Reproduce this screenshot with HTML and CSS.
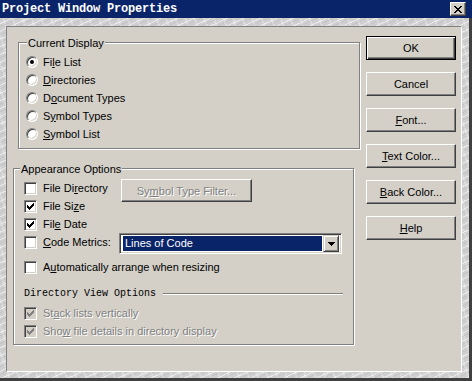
FILE: index.html
```html
<!DOCTYPE html>
<html lang="en">
<head>
    <meta charset="UTF-8">
    <title>Project Window Properties</title>
    <link rel="stylesheet" href="styles.css">
</head>
<body>
    <div class="window">
        <div class="titlebar">
            <span class="title">Project Window Properties</span>
            <span class="close-btn">
                <svg width="8" height="7" viewBox="0 0 8 7" shape-rendering="crispEdges">
                    <path d="M0 0h2v1h1v1h2v-1h1v-1h2v1h-1v1h-1v1h-1v1h1v1h1v1h1v1h-2v-1h-1v-1h-2v1h-1v1h-2v-1h1v-1h1v-1h1v-1h-1v-1h-1z" fill="#000"/>
                </svg>
            </span>
        </div>
        <div class="frame">
            <div class="panel">
                <div class="left-col">
                    <div class="group group-display">
                        <span class="group-title">Current Display</span>
                        <div class="radio-list">
                            <label class="opt"><span class="radio checked"></span><span>Fi<u>l</u>e List</span></label>
                            <label class="opt"><span class="radio"></span><span><u>D</u>irectories</span></label>
                            <label class="opt"><span class="radio"></span><span>D<u>o</u>cument Types</span></label>
                            <label class="opt"><span class="radio"></span><span>S<u>y</u>mbol Types</span></label>
                            <label class="opt"><span class="radio"></span><span><u>S</u>ymbol List</span></label>
                        </div>
                    </div>

                    <div class="group group-appearance">
                        <span class="group-title">Appearance Options</span>
                        <div class="appearance-grid">
                            <label class="opt grid-left"><span class="check"></span><span>File Di<u>r</u>ectory</span></label>
                            <button class="btn btn-disabled filter-btn">Sy<u>m</u>bol Type Filter...</button>
                            <label class="opt grid-left"><span class="check"><svg width="7" height="7" viewBox="0 0 7 7" shape-rendering="crispEdges"><path d="M0 2h1v1h1v1h1v-1h1v-1h1v-1h1v-1h1v3h-1v1h-1v1h-1v1h-1v1h-1v-1h-1v-1h-1z" fill="#000"/></svg></span><span>File Si<u>z</u>e</span></label>
                            <label class="opt grid-left"><span class="check"><svg width="7" height="7" viewBox="0 0 7 7" shape-rendering="crispEdges"><path d="M0 2h1v1h1v1h1v-1h1v-1h1v-1h1v-1h1v3h-1v1h-1v1h-1v1h-1v1h-1v-1h-1v-1h-1z" fill="#000"/></svg></span><span>Fil<u>e</u> Date</span></label>
                            <label class="opt grid-left"><span class="check"></span><span><u>C</u>ode Metrics:</span></label>
                            <div class="combo">
                                <span class="combo-value">Lines of Code</span>
                                <span class="combo-arrow">
                                    <svg width="7" height="4" viewBox="0 0 7 4" shape-rendering="crispEdges"><path d="M0 0h7v1h-1v1h-1v1h-1v1h-1v-1h-1v-1h-1v-1h-1z" fill="#000"/></svg>
                                </span>
                            </div>
                        </div>
                        <label class="opt opt-auto"><span class="check"></span><span>A<u>u</u>tomatically arrange when resizing</span></label>

                        <div class="subhead">
                            <span class="subhead-text">Directory View Options</span>
                            <span class="subhead-line"></span>
                        </div>
                        <label class="opt opt-disabled"><span class="check check-disabled"><svg width="7" height="7" viewBox="0 0 7 7" shape-rendering="crispEdges"><path d="M0 2h1v1h1v1h1v-1h1v-1h1v-1h1v-1h1v3h-1v1h-1v1h-1v1h-1v1h-1v-1h-1v-1h-1z" fill="#808080"/></svg></span><span>St<u>a</u>ck lists vertically</span></label>
                        <label class="opt opt-disabled"><span class="check check-disabled"><svg width="7" height="7" viewBox="0 0 7 7" shape-rendering="crispEdges"><path d="M0 2h1v1h1v1h1v-1h1v-1h1v-1h1v-1h1v3h-1v1h-1v1h-1v1h-1v1h-1v-1h-1v-1h-1z" fill="#808080"/></svg></span><span>Sho<u>w</u> file details in directory display</span></label>
                    </div>
                </div>

                <div class="btn-col">
                    <button class="btn btn-default">OK</button>
                    <button class="btn">Cancel</button>
                    <button class="btn"><u>F</u>ont...</button>
                    <button class="btn"><u>T</u>ext Color...</button>
                    <button class="btn"><u>B</u>ack Color...</button>
                    <button class="btn"><u>H</u>elp</button>
                </div>
            </div>
        </div>
    </div>
</body>
</html>
```

FILE: styles.css
```css
body {
    margin: 0;
    font-family: "Liberation Sans", Arial, sans-serif;
    font-size: 11px;
    color: #000;
}

u {
    text-decoration-thickness: 1px;
    text-underline-offset: 1px;
}

.window {
    width: 472px;
    height: 381px;
    display: flex;
    flex-direction: column;
    background-color: #cfcfcf;
    background-image:
        repeating-linear-gradient(155deg, rgba(255, 255, 255, 0.55) 0 1px, transparent 1px 3px, rgba(0, 0, 0, 0.05) 3px 4px, transparent 4px 7px),
        repeating-linear-gradient(70deg, rgba(255, 255, 255, 0.25) 0 2px, transparent 2px 9px);
}

.titlebar {
    height: 18px;
    background: #0a246a;
    display: flex;
    align-items: center;
    justify-content: space-between;
    padding: 0 6px 0 2px;
}

.title {
    color: #fff;
    font-family: "Liberation Mono", "DejaVu Sans Mono", monospace;
    font-weight: bold;
    font-size: 12px;
    letter-spacing: -0.2px;
}

.close-btn {
    width: 16px;
    height: 14px;
    box-sizing: border-box;
    background: #d4d0c8;
    border: 1px solid;
    border-color: #fff #404040 #404040 #fff;
    box-shadow: inset -1px -1px 0 #808080;
    display: flex;
    align-items: center;
    justify-content: center;
}

.frame {
    flex: 1;
    padding: 8px 0 0 6px;
    border-right: 3px solid #404040;
    border-bottom: 3px solid #404040;
}

.panel {
    width: 456px;
    height: 346px;
    box-sizing: border-box;
    background: #d4d0c8;
    border: 1px solid;
    border-color: #808080 #fff #fff #808080;
    display: flex;
    column-gap: 6px;
}

.left-col {
    width: 353px;
    display: flex;
    flex-direction: column;
    align-items: flex-start;
}

.group {
    box-sizing: border-box;
    border: 1px solid #808080;
    box-shadow: inset 1px 1px 0 #fff, 1px 1px 0 #fff;
    display: flex;
    flex-direction: column;
    align-items: flex-start;
}

.group-title {
    background: #d4d0c8;
    padding: 0 1px;
    line-height: 13px;
    margin-top: -6px;
}

.group-display {
    margin: 15px 0 0 11px;
    width: 342px;
    height: 107px;
    padding-left: 7px;
}

.group-display .group-title {
    margin-left: 1px;
}

.radio-list {
    margin-top: 3px;
}

.opt {
    display: flex;
    align-items: center;
    height: 18px;
    white-space: nowrap;
}

.radio {
    width: 12px;
    height: 12px;
    box-sizing: border-box;
    border-radius: 50%;
    background: #fff;
    border: 1px solid;
    border-color: #808080 #fff #fff #808080;
    box-shadow: inset 1px 1px 0 #404040, inset -1px -1px 0 #d4d0c8;
    margin-right: 5px;
    display: flex;
    align-items: center;
    justify-content: center;
}

.radio.checked::after {
    content: "";
    width: 4px;
    height: 4px;
    border-radius: 50%;
    background: #000;
}

.check {
    width: 13px;
    height: 13px;
    box-sizing: border-box;
    background: #fff;
    border: 1px solid;
    border-color: #808080 #fff #fff #808080;
    box-shadow: inset 1px 1px 0 #404040, inset -1px -1px 0 #d4d0c8;
    margin-right: 6px;
    display: flex;
    align-items: center;
    justify-content: center;
    flex-shrink: 0;
}

.check-disabled {
    background: #d4d0c8;
}

.group-appearance {
    margin: 19px 0 0 6px;
    width: 341px;
    height: 177px;
    padding: 0 10px;
}

.group-appearance .group-title {
    margin-left: -4px;
}

.appearance-grid {
    margin-top: 3px;
    align-self: stretch;
    display: grid;
    grid-template-columns: 95px 1fr;
    grid-auto-rows: 18px;
}

.grid-left {
    grid-column: 1;
}

.btn {
    width: 90px;
    height: 24px;
    box-sizing: border-box;
    padding: 0;
    background: #d4d0c8;
    font-family: inherit;
    font-size: 11px;
    color: #000;
    border: 1px solid;
    border-color: #fff #404040 #404040 #fff;
    box-shadow: inset -1px -1px 0 #808080;
}

.btn-default {
    border-color: #000;
    box-shadow: inset 1px 1px 0 #fff, inset -1px -1px 0 #404040, inset -2px -2px 0 #808080;
}

.btn-disabled {
    color: #808080;
    text-shadow: 1px 1px 0 #fff;
}

.filter-btn {
    grid-column: 2;
    grid-row: 1 / span 2;
    align-self: start;
    width: 131px;
    height: 23px;
    margin-left: 2px;
}

.combo {
    grid-column: 2;
    align-self: start;
    width: 223px;
    height: 21px;
    box-sizing: border-box;
    background: #fff;
    border: 1px solid;
    border-color: #808080 #fff #fff #808080;
    box-shadow: inset 1px 1px 0 #404040, inset -1px -1px 0 #d4d0c8;
    padding: 2px 2px 2px 3px;
    display: flex;
    gap: 1px;
}

.combo-value {
    flex: 1;
    background: #0a246a;
    color: #fff;
    padding-left: 2px;
    line-height: 15px;
}

.combo-arrow {
    width: 16px;
    box-sizing: border-box;
    margin: -1px 0;
    background: #d4d0c8;
    border: 1px solid;
    border-color: #d4d0c8 #404040 #404040 #d4d0c8;
    box-shadow: inset 1px 1px 0 #fff, inset -1px -1px 0 #808080;
    display: flex;
    align-items: center;
    justify-content: center;
}

.opt-auto {
    margin-top: 7px;
}

.subhead {
    margin-top: 8px;
    height: 18px;
    align-self: stretch;
    display: flex;
    align-items: center;
    gap: 7px;
}

.subhead-text {
    font-family: "Liberation Mono", "DejaVu Sans Mono", monospace;
    font-size: 10px;
}

.subhead-line {
    flex: 1;
    border-top: 1px solid #808080;
    border-bottom: 1px solid #fff;
    margin-top: 2px;
}

.opt-disabled {
    color: #808080;
    text-shadow: 1px 1px 0 #fff;
}

.group-appearance .subhead + .opt {
    margin-top: 2px;
}

.btn-col {
    padding-top: 9px;
    display: flex;
    flex-direction: column;
    gap: 12px;
}
```
